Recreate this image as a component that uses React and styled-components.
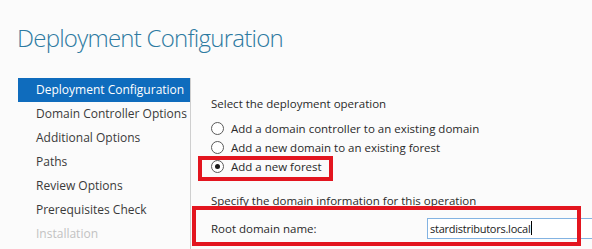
import styled, { createGlobalStyle } from "styled-components";

const GlobalStyle = createGlobalStyle`
  html, body {
    margin: 0;
    padding: 0;
    background: #fbfbfb;
  }
  body {
    font-family: "Open Sans", "Noto Sans", sans-serif;
    width: 592px;
    height: 249px;
    overflow: hidden;
  }
`;

const Page = styled.div`
  width: 592px;
  height: 249px;
  overflow: hidden;
  background: #fbfbfb;
`;

const Title = styled.h1`
  margin: 0;
  padding: 22px 0 0 17px;
  height: 78px;
  box-sizing: border-box;
  font-size: 24px;
  font-weight: 300;
  letter-spacing: -0.75px;
  color: #2d7aa1;
  line-height: 32px;
  white-space: nowrap;
`;

const Body = styled.div`
  display: flex;
  padding-left: 18px;
`;

const Sidebar = styled.ul`
  list-style: none;
  margin: 0;
  padding: 0;
  width: 172px;
  height: 180px;
  border-right: 1px solid #cfcfcf;
`;

const NavItem = styled.li`
  height: 24px;
  line-height: 24px;
  padding-left: 18px;
  font-size: 12px;
  white-space: nowrap;
  overflow: hidden;
  color: ${(p) => (p.$active ? "#ffffff" : p.$disabled ? "#c2c2c2" : "#3a3a3a")};
  background: ${(p) => (p.$active ? "#0f6cbd" : "transparent")};
`;

const Content = styled.div`
  flex: 1;
  padding: 16px 0 0 20px;
  font-size: 11.5px;
  color: #2a2a2a;
`;

const Label = styled.div`
  height: 19px;
  line-height: 19px;
  white-space: nowrap;
`;

const RadioList = styled.div`
  display: flex;
  flex-direction: column;
  margin: 6px 0 15px;
`;

const RadioRow = styled.label`
  display: flex;
  align-items: center;
  gap: 7px;
  height: 19px;
  white-space: nowrap;
`;

// red annotation frame drawn over the content it marks
const Annotated = styled.div`
  position: relative;
  align-self: flex-start;
  &::after {
    content: "";
    position: absolute;
    top: ${(p) => p.$top}px;
    left: ${(p) => p.$left}px;
    right: ${(p) => p.$right}px;
    bottom: ${(p) => p.$bottom}px;
    border: 4px solid #e3151f;
    pointer-events: none;
  }
`;

const Circle = styled.span`
  width: 11px;
  height: 11px;
  border: 1px solid #5a5a5a;
  border-radius: 50%;
  background: #fff;
  display: flex;
  align-items: center;
  justify-content: center;
  box-sizing: content-box;
  &::before {
    content: "";
    display: ${(p) => (p.$checked ? "block" : "none")};
    width: 5px;
    height: 5px;
    border-radius: 50%;
    background: #1a1a1a;
  }
`;

const FieldRow = styled.div`
  display: flex;
  align-items: center;
  height: 36px;
`;

const FieldLabel = styled.span`
  width: 216px;
  white-space: nowrap;
`;

const Input = styled.div`
  flex: 1;
  height: 19px;
  margin-right: -20px;
  border: 1px solid #83b3e2;
  background: #fff;
  display: flex;
  align-items: center;
  padding-left: 2px;
  font-size: 11px;
  letter-spacing: -0.25px;
  color: #1a1a1a;
  white-space: nowrap;
`;

const Caret = styled.span`
  display: inline-block;
  width: 1px;
  height: 14px;
  background: #000;
  margin-left: 1px;
`;

const Radio = ({ checked, children }) => (
  <RadioRow>
    <Circle $checked={checked} />
    <span>{children}</span>
  </RadioRow>
);

const navItems = [
  "Deployment Configuration",
  "Domain Controller Options",
  "Additional Options",
  "Paths",
  "Review Options",
  "Prerequisites Check",
  "Installation",
];

export default function App() {
  return (
    <Page>
      <GlobalStyle />
      <Title>Deployment Configuration</Title>
      <Body>
        <Sidebar>
          {navItems.map((item, i) => (
            <NavItem key={item} $active={i === 0} $disabled={i === navItems.length - 1}>
              {item}
            </NavItem>
          ))}
        </Sidebar>
        <Content>
          <Label>Select the deployment operation</Label>
          <RadioList>
            <Radio>Add a domain controller to an existing domain</Radio>
            <Radio>Add a new domain to an existing forest</Radio>
            <Annotated $top={-1} $left={-13} $right={-11} $bottom={-5}>
              <Radio checked>Add a new forest</Radio>
            </Annotated>
          </RadioList>
          <Label>Specify the domain information for this operation</Label>
          <Annotated $top={-4} $left={-19} $right={11} $bottom={0}>
            <FieldRow>
              <FieldLabel>Root domain name:</FieldLabel>
              <Input>
                stardistributors.local
                <Caret />
              </Input>
            </FieldRow>
          </Annotated>
        </Content>
      </Body>
    </Page>
  );
}
